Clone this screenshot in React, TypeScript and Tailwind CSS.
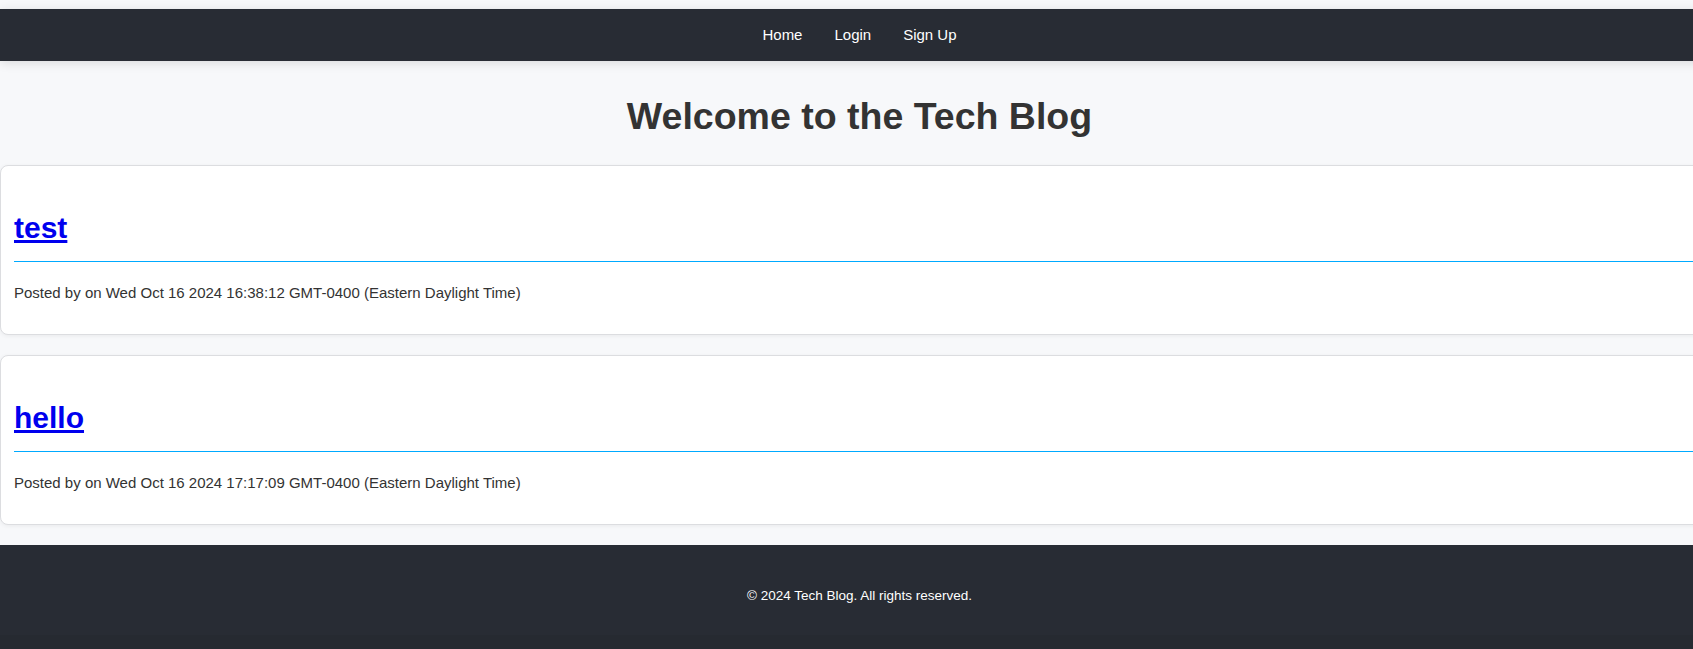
import React from 'react';

const posts = [
  { id: 1, title: 'test', date: 'Wed Oct 16 2024 16:38:12 GMT-0400 (Eastern Daylight Time)' },
  { id: 2, title: 'hello', date: 'Wed Oct 16 2024 17:17:09 GMT-0400 (Eastern Daylight Time)' },
];

const App: React.FC = () => {
  return (
    <div className="min-h-screen overflow-hidden bg-[#f7f8fa] font-['Liberation_Sans',Arial,sans-serif]">
      <div className="w-[1719px] pt-[9px]">
        {/* Header */}
        <header className="relative z-10 flex h-[52px] items-center justify-center gap-8 bg-[#282c34] pb-[2px] shadow-[0_2px_10px_rgba(0,0,0,0.12)]">
          <a href="#" className="text-[15px] leading-[normal] text-white">Home</a>
          <a href="#" className="text-[15px] leading-[normal] text-white">Login</a>
          <a href="#" className="text-[15px] leading-[normal] text-white">Sign Up</a>
        </header>

        <main>
          <h1 className="mt-[34px] text-center text-[37.5px] font-bold leading-[normal] text-[#333]">
            Welcome to the Tech Blog
          </h1>

          <div className="mt-[27px] space-y-5">
            {posts.map(p => (
              <div key={p.id} className="h-[170px] rounded-lg border border-[#dcdde0] bg-white pl-[13px] pt-5 shadow-[0_1px_4px_rgba(0,0,0,0.06)]">
                <h2 className="mt-[25px] border-b border-[#00aaff] pb-4 text-[30px] font-bold leading-[normal]">
                  <a href="#" className="text-[#0000ee] underline">{p.title}</a>
                </h2>
                <p className="mt-[22px] text-[15px] leading-[normal] text-[#333]">
                  Posted by  on {p.date}
                </p>
              </div>
            ))}
          </div>
        </main>

        {/* Footer */}
        <footer className="mt-5 h-[90px] bg-[#282c34] pt-[43px] text-center">
          <p className="text-[13.5px] leading-[normal] text-white">© 2024 Tech Blog. All rights reserved.</p>
        </footer>
        <div className="h-[14px] bg-[#262a31]" />
      </div>
    </div>
  );
};

export default App;
